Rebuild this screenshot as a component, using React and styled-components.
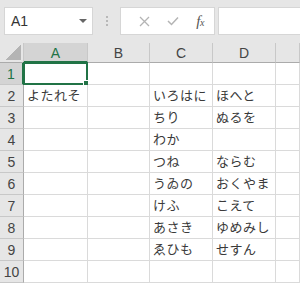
import React from "react";
import styled, { createGlobalStyle } from "styled-components";

const Global = createGlobalStyle`
  html, body { margin: 0; padding: 0; background: #fff; }
  body { width: 300px; height: 283px; overflow: hidden; font-family: "Noto Sans CJK JP", "Noto Sans", sans-serif; }
`;

const Page = styled.div`
  width: 300px;
  height: 283px;
  display: flex;
  flex-direction: column;
  overflow: hidden;
`;

const Toolbar = styled.div`
  height: 43px;
  background: #e6e6e6;
  display: flex;
  align-items: flex-start;
  padding-top: 7px;
  padding-left: 4px;
  box-sizing: border-box;
`;

const NameBox = styled.div`
  width: 89px;
  height: 28px;
  background: #fff;
  border: 1px solid #d6d6d6;
  box-sizing: border-box;
  display: flex;
  align-items: center;
  justify-content: space-between;
  padding: 0 5px 0 6px;
  font-family: "Liberation Sans", "Noto Sans", sans-serif;
  font-size: 14px;
  color: #333;
`;

const Caret = styled.span`
  width: 0;
  height: 0;
  border-left: 4px solid transparent;
  border-right: 4px solid transparent;
  border-top: 4px solid #666;
`;

const Dots = styled.div`
  width: 27px;
  height: 28px;
  display: flex;
  flex-direction: column;
  align-items: center;
  justify-content: center;
  gap: 2px;
  span { width: 2px; height: 2px; background: #a8a8a8; border-radius: 1px; }
`;

const FxButtons = styled.div`
  width: 95px;
  height: 28px;
  background: #fff;
  border: 1px solid #d6d6d6;
  box-sizing: border-box;
  display: flex;
  align-items: center;
  padding-left: 10px;
`;

const IconSlot = styled.div`
  width: ${(p) => p.w}px;
  display: flex;
  align-items: center;
  justify-content: center;
`;

const Fx = styled.span`
  font-family: "Liberation Serif", serif;
  font-style: italic;
  font-size: 15px;
  color: #555;
  letter-spacing: -0.5px;
  line-height: 1;
  span { font-size: 10px; }
`;

const FormulaInput = styled.div`
  flex: 1;
  height: 28px;
  margin-left: 3px;
  background: #fff;
  border: 1px solid #d6d6d6;
  border-right: none;
  box-sizing: border-box;
`;

const Grid = styled.div`
  display: grid;
  grid-template-columns: 24px 64px 62px 63px 63px 1fr;
  grid-template-rows: 20px repeat(10, 22px);
`;

const Corner = styled.div`
  background: #e6e6e6;
  border-right: 1px solid #c8c8c8;
  border-bottom: 1px solid #ababab;
  box-sizing: border-box;
  display: flex;
  align-items: flex-end;
  justify-content: flex-end;
  padding: 0 2px 2px 0;
`;

const CornerMark = styled.span`
  display: block;
  flex: none;
  width: 15px;
  height: 15px;
  background: linear-gradient(135deg, rgba(0, 0, 0, 0) 50%, #b4b4b4 50%);
`;

const ColHead = styled.div`
  background: ${(p) => (p.active ? "#d4d4d4" : "#e6e6e6")};
  color: ${(p) => (p.active ? "#217346" : "#444")};
  border-right: 1px solid #c8c8c8;
  border-bottom: ${(p) => (p.active ? "2px solid #217346" : "1px solid #ababab")};
  box-sizing: border-box;
  display: flex;
  align-items: center;
  justify-content: center;
  font-family: "Liberation Sans", "Noto Sans", sans-serif;
  font-size: 14px;
  padding-top: ${(p) => (p.active ? "1px" : "0")};
`;

const RowHead = styled.div`
  background: ${(p) => (p.active ? "#d4d4d4" : "#e6e6e6")};
  color: ${(p) => (p.active ? "#217346" : "#444")};
  border-right: ${(p) => (p.active ? "2px solid #217346" : "1px solid #ababab")};
  border-bottom: 1px solid #c8c8c8;
  box-sizing: border-box;
  display: flex;
  align-items: center;
  justify-content: center;
  font-family: "Liberation Sans", "Noto Sans", sans-serif;
  font-size: 14px;
`;

const Cell = styled.div`
  background: #fff;
  border-right: 1px solid #dadada;
  border-bottom: 1px solid #dadada;
  box-sizing: border-box;
  display: flex;
  align-items: flex-end;
  padding: 0 0 2px 3px;
  font-size: 13px;
  color: #3a3a3a;
  white-space: nowrap;
  position: relative;
  letter-spacing: 0.5px;
`;

const Selection = styled.div`
  position: absolute;
  left: -1px;
  top: -1px;
  right: -1px;
  bottom: -1px;
  border: 2px solid #217346;
  pointer-events: none;
  &::after {
    content: "";
    position: absolute;
    right: -4px;
    bottom: -4px;
    width: 5px;
    height: 5px;
    background: #217346;
    border: 1px solid #fff;
  }
`;

const cols = ["A", "B", "C", "D", ""];
const data = {
  2: { A: "よたれそ", C: "いろはに", D: "ほへと" },
  3: { C: "ちり", D: "ぬるを" },
  4: { C: "わか" },
  5: { C: "つね", D: "ならむ" },
  6: { C: "うゐの", D: "おくやま" },
  7: { C: "けふ", D: "こえて" },
  8: { C: "あさき", D: "ゆめみし" },
  9: { C: "ゑひも", D: "せすん" },
};

export default function App() {
  const rows = Array.from({ length: 10 }, (_, i) => i + 1);
  return (
    <Page>
      <Global />
      <Toolbar>
        <NameBox>
          <span>A1</span>
          <Caret />
        </NameBox>
        <Dots>
          <span />
          <span />
          <span />
        </Dots>
        <FxButtons>
          <IconSlot w={30}>
            <svg width="11" height="11" viewBox="0 0 11 11">
              <path d="M1 1 L10 10 M10 1 L1 10" stroke="#b4b4b4" strokeWidth="1.3" />
            </svg>
          </IconSlot>
          <IconSlot w={30}>
            <svg width="12" height="10" viewBox="0 0 12 10">
              <path d="M1 5 L4.5 8.5 L11 1.5" stroke="#b4b4b4" strokeWidth="1.5" fill="none" />
            </svg>
          </IconSlot>
          <IconSlot w={30}>
            <Fx>
              f<span>x</span>
            </Fx>
          </IconSlot>
        </FxButtons>
        <FormulaInput />
      </Toolbar>
      <Grid>
        <Corner>
          <CornerMark />
        </Corner>
        {cols.map((c, i) => (
          <ColHead key={i} active={c === "A"}>
            {c}
          </ColHead>
        ))}
        {rows.map((r) => (
          <React.Fragment key={r}>
            <RowHead active={r === 1}>{r}</RowHead>
            {cols.map((c, i) => (
              <Cell key={i}>
                {(data[r] && data[r][c]) || ""}
                {r === 1 && c === "A" && <Selection />}
              </Cell>
            ))}
          </React.Fragment>
        ))}
      </Grid>
    </Page>
  );
}
